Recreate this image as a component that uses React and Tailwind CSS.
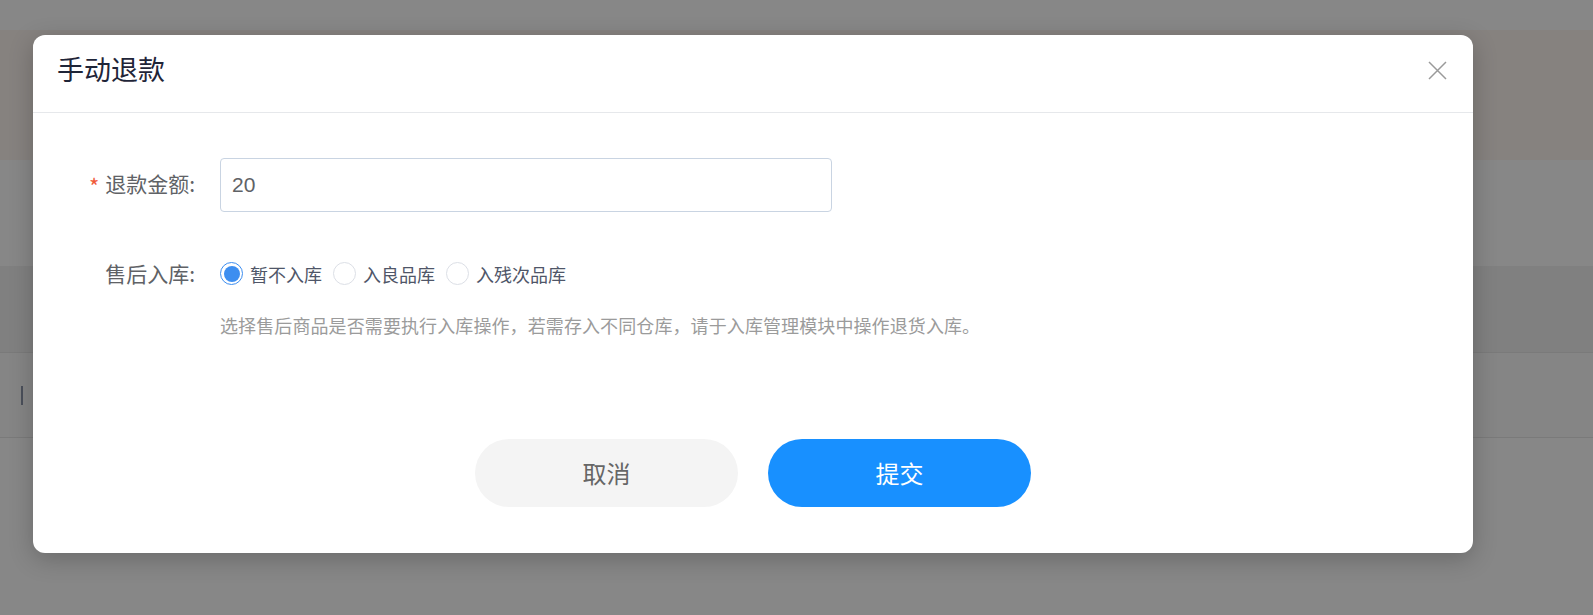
import React, { useState } from "react";

const cjk = "font-['Microsoft_YaHei','Noto_Sans_CJK_SC',sans-serif]";

function Radio({ checked, label, onClick }) {
  return (
    <label className="flex items-center cursor-pointer" onClick={onClick}>
      <span
        className={
          "flex h-[23px] w-[23px] items-center justify-center rounded-full border bg-white " +
          (checked ? "border-[#3d8ef0]" : "border-[#dcdfe6]")
        }
      >
        {checked && <span className="h-[16px] w-[16px] rounded-full bg-[#3d8ef0]" />}
      </span>
      <span className="ml-[7px] text-[18px] leading-6 text-[#4f5668]">{label}</span>
    </label>
  );
}

export default function App() {
  const [stock, setStock] = useState(0);
  const [amount, setAmount] = useState("20");
  const options = ["暂不入库", "入良品库", "入残次品库"];

  return (
    <div className={"relative h-[615px] w-full overflow-hidden bg-[#878787] " + cjk}>
      {/* 遮罩下的页面 */}
      <div className="h-[30px] bg-[#878787]" />
      <div className="h-[130px] bg-[#86827f]" />
      <div className="h-[106px] bg-[#878787]" />
      <div className="h-[86px] bg-[#808080]" />
      <div className="flex h-[86px] items-center border-t border-b border-[#7a7a7a] bg-[#858585] pl-[21px]">
        <div className="h-[19px] w-[2px] bg-[#4a4f5a]" />
      </div>

      {/* 弹窗 */}
      <div className="absolute left-[33px] top-[35px] w-[1440px] rounded-[12px] bg-white shadow-[0_6px_24px_rgba(0,0,0,0.22)]">
        <div className="flex h-[78px] items-center justify-between border-b border-[#e6e8eb] pl-[24px] pr-[26px]">
          <h2 className="-mt-[9px] text-[27px] font-normal text-[#1f2538]">手动退款</h2>
          <button className="-mt-[6px] text-[#9a9a9a]">
            <svg width="19" height="19" viewBox="0 0 19 19" fill="none" stroke="currentColor" strokeWidth="1.5">
              <path d="M1 1 L18 18 M18 1 L1 18" />
            </svg>
          </button>
        </div>

        <div className="pt-[45px] pb-[46px]">
          {/* 退款金额 */}
          <div className="flex items-center">
            <div className="w-[187px] pr-[25px] text-right text-[21px] text-[#606266]">
              <span className="mr-[6px] align-middle text-[22px] text-[#f05a3a]">*</span>退款金额:
            </div>
            <input
              value={amount}
              onChange={(e) => setAmount(e.target.value)}
              className="h-[54px] w-[612px] rounded-[4px] border border-[#c9d4e2] px-[11px] font-['Liberation_Sans',sans-serif] text-[21px] text-[#606266] outline-none"
            />
          </div>

          {/* 售后入库 */}
          <div className="mt-[46px] flex items-center">
            <div className="w-[187px] pr-[25px] text-right text-[21px] text-[#606266]">售后入库:</div>
            <div className="flex items-center gap-[11px]">
              {options.map((o, i) => (
                <Radio key={o} label={o} checked={stock === i} onClick={() => setStock(i)} />
              ))}
            </div>
          </div>
          <p className="ml-[187px] mt-[23px] text-[18px] leading-6 tracking-[0.1px] text-[#9b9b9b]">
            选择售后商品是否需要执行入库操作，若需存入不同仓库，请于入库管理模块中操作退货入库。
          </p>

          {/* 按钮 */}
          <div className="mt-[102px] flex justify-center gap-[30px]">
            <button className="h-[68px] w-[263px] rounded-full bg-[#f4f4f4] text-[24px] text-[#666]">取消</button>
            <button className="h-[68px] w-[263px] rounded-full bg-[#1890ff] text-[24px] text-white">提交</button>
          </div>
        </div>
      </div>
    </div>
  );
}
